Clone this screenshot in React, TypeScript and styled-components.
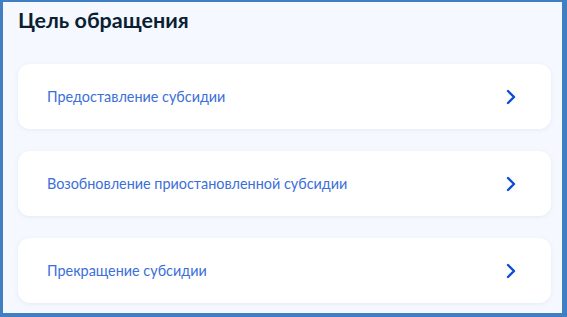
import React from 'react';
import styled, { createGlobalStyle } from 'styled-components';

const GlobalStyle = createGlobalStyle`
  html, body {
    margin: 0;
    padding: 0;
    background: #ffffff;
  }
  * {
    box-sizing: border-box;
  }
`;

const Frame = styled.div`
  width: 567px;
  height: 317px;
  border-style: solid;
  border-color: #3f7fc2;
  border-width: 2px 5px 4px 3px;
  background: #f5f8fe;
  font-family: Lato, 'Noto Sans', sans-serif;
  padding: 4px 11px 0 15px;
  overflow: hidden;
`;

const Title = styled.h2`
  margin: 0 0 30px;
  font-size: 21.5px;
  line-height: 28px;
  font-weight: 700;
  color: #0b1f33;
`;

const List = styled.div`
  display: flex;
  flex-direction: column;
  gap: 22px;
`;

const Option = styled.button`
  display: flex;
  align-items: center;
  justify-content: space-between;
  width: 100%;
  height: 65px;
  padding: 0 35px 0 29px;
  border: none;
  border-radius: 12px;
  background: #ffffff;
  box-shadow: 0 1px 4px rgba(102, 150, 204, 0.12);
  cursor: pointer;
  font-family: inherit;
  font-size: 14.4px;
  color: #3b6fd9;
  text-align: left;
`;

const Chevron = () => (
  <svg width="10" height="16" viewBox="0 0 10 16" fill="none">
    <path d="M2 2l6 6-6 6" stroke="#0d4cd3" strokeWidth="2.4" strokeLinecap="round" strokeLinejoin="round" />
  </svg>
);

const options = [
  'Предоставление субсидии',
  'Возобновление приостановленной субсидии',
  'Прекращение субсидии',
];

export default function App() {
  return (
    <>
      <GlobalStyle />
      <Frame>
        <Title>Цель обращения</Title>
        <List>
          {options.map((o) => (
            <Option key={o}>
              <span>{o}</span>
              <Chevron />
            </Option>
          ))}
        </List>
      </Frame>
    </>
  );
}
